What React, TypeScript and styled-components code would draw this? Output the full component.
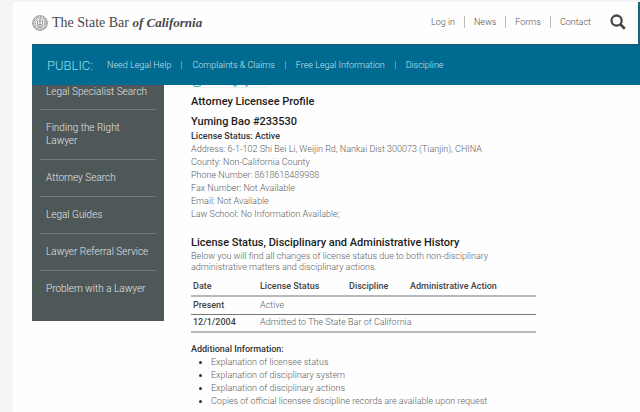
import React from 'react';
import styled, { createGlobalStyle } from 'styled-components';

const GlobalStyle = createGlobalStyle`
  * { box-sizing: border-box; }
  html { background: #f5f5f5; overflow: hidden; }
  body {
    margin: 0;
    color: #606060;
    font: 300 9px/13px Roboto, sans-serif;
  }
  a { color: inherit; text-decoration: none; }
  ul { margin: 0; padding: 0; }
`;

const Page = styled.div`
  margin: 2px 0 0 13px;
  padding-left: 19px;
  min-height: calc(100vh - 2px);
  background: #fefefe;
`;

const Header = styled.header`
  display: flex;
  align-items: center;
  justify-content: space-between;
  height: 42px;
  padding-right: 12px;
  border-right: 2px solid #17647c;
`;

const Brand = styled.a`
  display: flex;
  align-items: center;
  gap: 4px;
  color: #48484a;
  font: 400 14px/20px 'Liberation Serif', serif;
  white-space: nowrap;

  em { font-size: 13px; font-weight: 700; }
`;

const UtilityNav = styled.nav`
  display: flex;
  align-items: center;
  padding-bottom: 2px;
  color: #505050;
`;

const UtilityLink = styled.a`
  padding: 0 9px;
  line-height: 12px;

  & + & { border-left: 1px solid #bdbdbd; }
`;

const SearchButton = styled.button`
  display: flex;
  margin-left: 10px;
  padding: 0;
  border: 0;
  background: none;
  color: #474949;
`;

const PublicNav = styled.nav`
  display: flex;
  align-items: center;
  height: 41px;
  padding-left: 15px;
  border-top: 1px solid #17566c;
  background: #006a91;
  color: #c4e4ee;
`;

const NavTitle = styled.span`
  margin-right: 14px;
  color: #8ce0ee;
  font-size: 13px;
`;

const NavLink = styled.a`
  display: flex;
  align-items: center;

  & + &::before {
    content: '';
    height: 8px;
    margin: 0 10px;
    border-left: 1px solid #4d9cb5;
  }
`;

const Body = styled.div`
  display: flex;
  align-items: flex-start;
`;

const Sidebar = styled.nav`
  flex: 0 0 132px;
  padding: 0 8px 14px;
  background: #4f5859;
`;

const SideLink = styled.a<{ $first?: boolean }>`
  display: block;
  padding: ${({ $first }) => ($first ? '0 6px 11px' : '11px 6px 12px')};
  color: #e0e4e4;
  font-size: 10px;

  & + & { border-top: 1px solid #707878; }
`;

const Main = styled.main`
  flex: 1;
  min-width: 0;
  padding-left: 27px;
`;

const Remnant = styled.svg`
  display: block;
`;

const Title = styled.h1`
  margin: 6px 0 0;
  color: #1c1c1c;
  font-size: 11px;
  font-weight: 500;
  line-height: 16px;
`;

const Name = styled(Title)`
  margin: 4px 0 0;
`;

const Label = styled.h3`
  margin: 0;
  color: #333;
  font-size: 9px;
  font-weight: 500;
`;

const Text = styled.p`
  margin: 0;
`;

const Section = styled.section<{ $gap: number }>`
  max-width: 345px;
  margin-top: ${({ $gap }) => $gap}px;
`;

const SectionTitle = styled(Title)`
  margin: 0;
  white-space: nowrap;
`;

const Intro = styled.p`
  margin: 0;
  line-height: 11px;
`;

const Table = styled.table`
  width: 100%;
  margin-top: 4px;
  border-collapse: collapse;
  table-layout: fixed;
  text-align: left;

  th { color: #444; font-weight: 500; }
  th, td { height: 18px; padding: 0 2px; white-space: nowrap; font-size: 9px; }
  thead th { height: 19px; border-bottom: 2px solid #b8b8b8; }
  tbody tr { border-bottom: 1px solid #777; }
  tbody tr:last-child { border-bottom: 2px solid #b8b8b8; }
`;

const Col = styled.col<{ $w?: number }>`
  width: ${({ $w }) => ($w ? `${$w}px` : 'auto')};
`;

const LinkList = styled.ul`
  padding-left: 20px;
  white-space: nowrap;

  li::marker { color: #333; }
`;

const utility = ['Log in', 'News', 'Forms', 'Contact'];
const publicLinks = ['Need Legal Help', 'Complaints & Claims', 'Free Legal Information', 'Discipline'];
const sideLinks = [
  'Legal Specialist Search', 'Finding the Right Lawyer', 'Attorney Search',
  'Legal Guides', 'Lawyer Referral Service', 'Problem with a Lawyer',
];
const details = [
  'Address: 6-1-102 Shi Bei Li, Weijin Rd, Nankai Dist 300073 (Tianjin), CHINA',
  'County: Non-California County',
  'Phone Number: 8618618489988',
  'Fax Number: Not Available',
  'Email: Not Available',
  'Law School: No Information Available;',
];
const resources = [
  'Explanation of licensee status', 'Explanation of disciplinary system',
  'Explanation of disciplinary actions',
  'Copies of official licensee discipline records are available upon request',
];

const Seal = () => (
  <svg width="16" height="16" viewBox="0 0 16 16" fill="none" stroke="#777" aria-hidden="true">
    <circle cx="8" cy="8" r="7.4" strokeWidth=".7" />
    <circle cx="8" cy="8" r="6.2" strokeWidth="1.4" strokeDasharray=".8 .7" />
    <circle cx="8" cy="8" r="4.7" strokeWidth=".6" />
    <path d="M5.5 5.5v4c0 1.5 1.2 2.3 2.5 2.6 1.3-.3 2.5-1.1 2.5-2.6v-4M8 4v7M6.6 6h2.8M6.5 9.5h3" strokeWidth=".8" />
  </svg>
);

export default function App() {
  return (
    <>
      <GlobalStyle />
      <Page>
        <Header>
          <Brand href="#">
            <Seal />
            <span>The State Bar <em>of California</em></span>
          </Brand>
          <UtilityNav aria-label="Utility">
            {utility.map((t) => <UtilityLink href="#" key={t}>{t}</UtilityLink>)}
            <SearchButton type="button" aria-label="Search">
              <svg width="16" height="16" viewBox="0 0 16 16" fill="none" stroke="currentColor">
                <circle cx="6.6" cy="6.6" r="5.1" strokeWidth="2.3" />
                <path d="M10.3 10.3l4.5 4.5" strokeWidth="2.7" />
              </svg>
            </SearchButton>
          </UtilityNav>
        </Header>
        <PublicNav aria-label="Public">
          <NavTitle>PUBLIC:</NavTitle>
          {publicLinks.map((t) => <NavLink href="#" key={t}>{t}</NavLink>)}
        </PublicNav>
        <Body>
          <Sidebar aria-label="Services">
            {sideLinks.map((t, i) => <SideLink href="#" key={t} $first={i === 0}>{t}</SideLink>)}
          </Sidebar>
          <Main>
            <Remnant width="80" height="3" viewBox="0 0 80 3" fill="none" aria-hidden="true">
              <path d="M2 .5q4 2.6 8 0M42 .5q2 1.5 4 0M54 .5q2 1.5 3 0" stroke="#3b9ab5" />
              <path d="M0 2.5h77" stroke="#dcebef" strokeWidth=".6" />
            </Remnant>
            <Title>Attorney Licensee Profile</Title>
            <Name as="h2">Yuming Bao #233530</Name>
            <Label>License Status: Active</Label>
            {details.map((t) => <Text key={t}>{t}</Text>)}
            <Section $gap={14}>
              <SectionTitle as="h2">License Status, Disciplinary and Administrative History</SectionTitle>
              <Intro>
                Below you will find all changes of license status due to both non-disciplinary
                administrative matters and disciplinary actions.
              </Intro>
              <Table>
                <colgroup><Col $w={67} /><Col $w={89} /><Col $w={61} /><Col /></colgroup>
                <thead>
                  <tr>
                    <th scope="col">Date</th>
                    <th scope="col">License Status</th>
                    <th scope="col">Discipline</th>
                    <th scope="col">Administrative Action</th>
                  </tr>
                </thead>
                <tbody>
                  <tr><th scope="row">Present</th><td colSpan={3}>Active</td></tr>
                  <tr><th scope="row">12/1/2004</th><td colSpan={3}>Admitted to The State Bar of California</td></tr>
                </tbody>
              </Table>
            </Section>
            <Section $gap={10}>
              <Label>Additional Information:</Label>
              <LinkList>
                {resources.map((t) => <li key={t}><a href="#">{t}</a></li>)}
              </LinkList>
            </Section>
          </Main>
        </Body>
      </Page>
    </>
  );
}
